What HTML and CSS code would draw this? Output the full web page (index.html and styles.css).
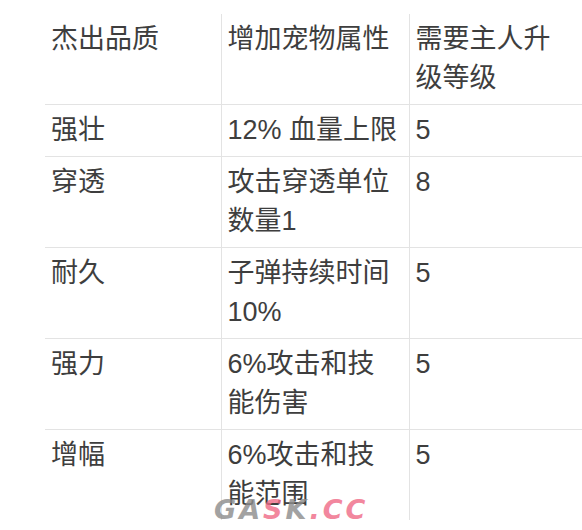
FILE: index.html
```html
<!DOCTYPE html>
<html lang="zh-CN">
<head>
<meta charset="utf-8">
<title>杰出品质</title>
<link rel="stylesheet" href="styles.css">
</head>
<body>
<div class="page">
  <table class="quality">
    <colgroup>
      <col class="c1"><col class="c2"><col class="c3">
    </colgroup>
    <tr><td>杰出品质</td><td>增加宠物属性</td><td>需要主人升级等级</td></tr>
    <tr><td>强壮</td><td>12% 血量上限</td><td>5</td></tr>
    <tr><td>穿透</td><td>攻击穿透单位数量1</td><td>8</td></tr>
    <tr><td>耐久</td><td>子弹持续时间10%</td><td>5</td></tr>
    <tr><td>强力</td><td>6%攻击和技能伤害</td><td>5</td></tr>
    <tr><td>增幅</td><td>6%攻击和技能范围</td><td>5</td></tr>
  </table>
  <div class="watermark"><span class="g">GA</span><span class="p">S</span><span class="g">K</span><span class="p">.CC</span></div>
</div>
</body>
</html>
```

FILE: styles.css
```css
html, body {
  margin: 0;
  padding: 0;
  background: #ffffff;
}
.page {
  position: relative;
  width: 582px;
  height: 530px;
  overflow: hidden;
  padding: 14px 0 0 45px;
  box-sizing: border-box;
}
.quality {
  border-collapse: collapse;
  table-layout: fixed;
  width: 540px;
  font-family: "Liberation Sans", "Noto Sans CJK SC", sans-serif;
  font-size: 27px;
  line-height: 39px;
  color: #3e3e3e;
}
.c1 { width: 176px; }
.c2 { width: 188px; }
.c3 { width: 176px; }
.quality td {
  vertical-align: top;
  padding: 6px 4px 6px 6px;
  border-top: 1px solid #e3e3e3;
  border-left: 1px solid #e3e3e3;
}
.quality tr:first-child td { border-top: none; }
.quality td:first-child { border-left: none; }
.quality td:nth-child(2) { padding-right: 10px; }
.quality td:nth-child(3) { padding-right: 30px; }
.watermark {
  position: absolute;
  left: 214px;
  top: 494px;
  font-family: "DejaVu Sans", sans-serif;
  font-weight: bold;
  font-style: italic;
  font-size: 27px;
  letter-spacing: 3px;
  opacity: 0.8;
}
.watermark .g { color: #8c8c8c; }
.watermark .p { color: #ef6a86; }
```
